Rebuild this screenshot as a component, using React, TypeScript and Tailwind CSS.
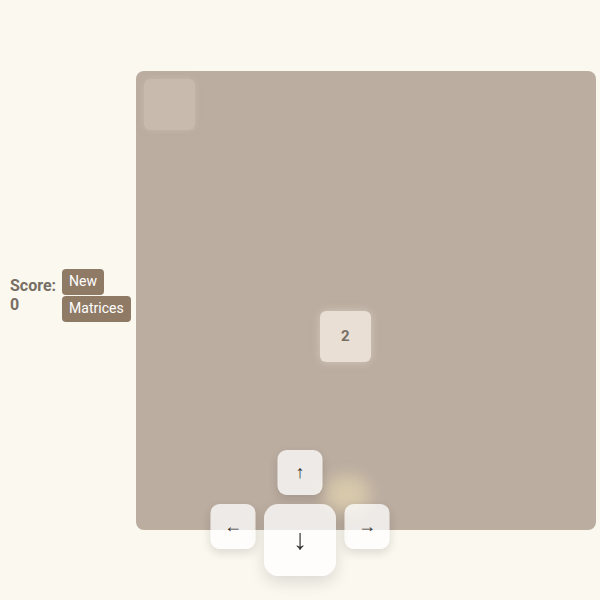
const keyBtn =
  "w-[45px] h-[45px] rounded-[9px] bg-white/75 shadow-[0_4px_10px_rgba(0,0,0,0.12)] flex items-center justify-center text-[18px] text-[#333] font-['Liberation_Sans','DejaVu_Sans',sans-serif]";

export default function App() {
  return (
    <div
      className="relative h-screen overflow-hidden bg-[#faf8ef] flex items-center pl-[10px] gap-[5px]"
      style={{ fontFamily: "Roboto, 'Liberation Sans', sans-serif" }}
    >
      <div className="flex items-center gap-[6px] mb-[10px]">
        <div className="text-[16px] font-bold leading-[19px] text-[#776e65]">
          <div>Score:</div>
          <div>0</div>
        </div>
        <div className="flex flex-col items-start gap-px">
          <button className="h-[26px] px-[7px] rounded-[4px] bg-[#8f7a66] text-white text-[14px]">New</button>
          <button className="h-[26px] px-[7px] rounded-[4px] bg-[#8f7a66] text-white text-[14px]">Matrices</button>
        </div>
      </div>

      <div className="w-[460px] h-[459px] shrink-0 rounded-[8px] bg-[#bbada0] p-2 grid grid-cols-[repeat(8,51px)] grid-rows-[repeat(8,51px)] gap-x-[7.7px] gap-y-[7px] content-start">
        <div className="col-start-1 row-start-1 rounded-[6px] bg-[#cdc1b4]/70 shadow-[0_0_6px_rgba(205,193,180,0.6)]" />
        <div className="col-start-4 row-start-5 rounded-[6px] bg-[#eee4da]/90 shadow-[0_0_10px_rgba(238,228,218,0.5)] flex items-center justify-center text-[15px] font-bold text-[#776e65]">
          2
        </div>
      </div>

      <div className="absolute left-[325px] top-[476px] w-[45px] h-[36px] rounded-full bg-[#f5e6b8]/50 blur-[8px]" />

      <div className="absolute left-1/2 -translate-x-1/2 top-[450px] grid grid-cols-[repeat(3,45px)] gap-x-[22px] gap-y-[9px]">
        <div />
        <button className={keyBtn}>{"\u2191\uFE0E"}</button>
        <div />
        <button className={keyBtn}>{"\u2190\uFE0E"}</button>
        <button className={keyBtn + " origin-top scale-[1.6]"}>{"\u2193\uFE0E"}</button>
        <button className={keyBtn}>{"\u2192\uFE0E"}</button>
      </div>
    </div>
  );
}
